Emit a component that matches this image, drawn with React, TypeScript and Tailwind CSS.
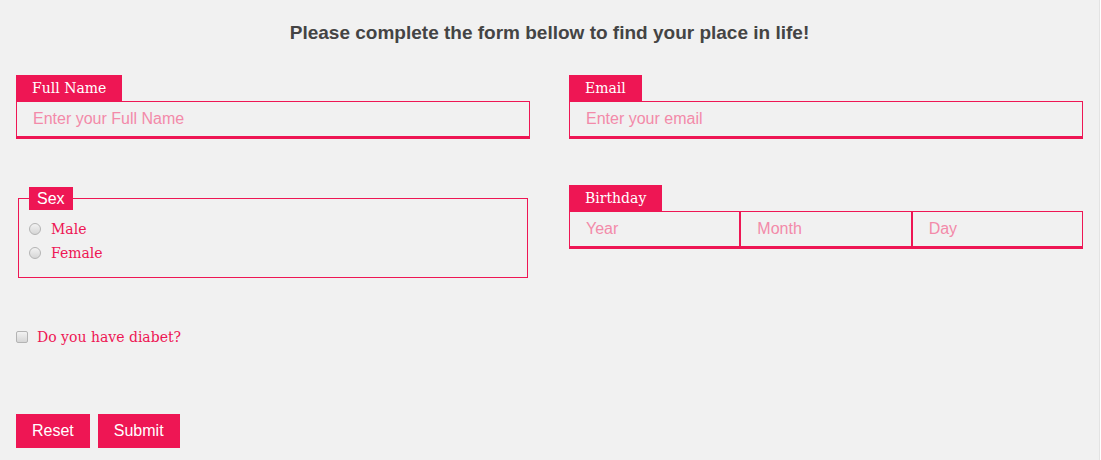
import { useState } from 'react';

const serif = 'font-["DejaVu_Serif",serif]';
const sans = 'font-["Liberation_Sans",Arial,sans-serif]';

function FieldLabel({ children }: { children: React.ReactNode }) {
  return (
    <div className={`${serif} inline-block h-[26px] bg-[#ee1654] px-4 text-[14px] leading-[26px] text-white`}>
      {children}
    </div>
  );
}

function TextBox({ placeholder, className = '' }: { placeholder: string; className?: string }) {
  return (
    <input
      type="text"
      placeholder={placeholder}
      className={`${sans} block h-[38px] w-full min-w-0 border border-b-[3px] border-[#ee1654] bg-transparent px-4 text-[16px] text-[#ee1654] outline-none placeholder:text-[#f38aa9] ${className}`}
    />
  );
}

function Radio({ name, label }: { name: string; label: string }) {
  return (
    <label className="flex h-6 items-center gap-[10px]">
      <input
        type="radio"
        name={name}
        className="h-3 w-3 appearance-none rounded-full border border-[#b4b4b4] bg-linear-to-b from-[#f2f2f2] to-[#d6d6d6] checked:bg-[#ee1654]"
      />
      <span className={`${serif} text-[14px] text-[#ee1654]`}>{label}</span>
    </label>
  );
}

export default function App() {
  const [diabet, setDiabet] = useState(false);

  return (
    <div className="min-h-screen w-[1100px] border-r border-[#e3e3e3] bg-[#f1f1f1]">
      <h1 className={`${sans} pt-[22px] text-center text-[19px] font-bold leading-[22px] text-[#444]`}>
        Please complete the form bellow to find your place in life!
      </h1>

      <form className="px-4 pt-[31px]" onSubmit={(e) => e.preventDefault()}>
        <div className="grid grid-cols-2 gap-x-[39px]">
          <div>
            <FieldLabel>Full Name</FieldLabel>
            <TextBox placeholder="Enter your Full Name" />
          </div>
          <div>
            <FieldLabel>Email</FieldLabel>
            <TextBox placeholder="Enter your email" />
          </div>
        </div>

        <div className="mt-[46px] grid grid-cols-2 items-start gap-x-[39px]">
          <fieldset className="mx-[2px] mt-[2px] border border-[#ee1654] pb-3 pl-[10px] pr-[10px] pt-[7px]">
            <legend className={`${sans} h-[23px] bg-[#ee1654] px-2 text-[16px] leading-[23px] text-white`}>Sex</legend>
            <Radio name="sex" label="Male" />
            <Radio name="sex" label="Female" />
          </fieldset>
          <div>
            <FieldLabel>Birthday</FieldLabel>
            <div className="flex">
              <TextBox placeholder="Year" className="flex-1" />
              <TextBox placeholder="Month" className="flex-1" />
              <TextBox placeholder="Day" className="flex-1" />
            </div>
          </div>
        </div>

        <label className="mt-[47px] flex h-6 items-center gap-[9px]">
          <input
            type="checkbox"
            checked={diabet}
            onChange={(e) => setDiabet(e.target.checked)}
            className="h-3 w-3 appearance-none rounded-[2px] border border-[#b4b4b4] bg-linear-to-b from-[#f2f2f2] to-[#d6d6d6] checked:bg-[#ee1654]"
          />
          <span className={`${serif} text-[14px] text-[#ee1654]`}>Do you have diabet?</span>
        </label>

        <div className="mt-[65px] flex gap-2">
          <button type="reset" className={`${sans} h-[34px] bg-[#ee1654] px-4 text-[16px] text-white`}>
            Reset
          </button>
          <button type="submit" className={`${sans} h-[34px] bg-[#ee1654] px-4 text-[16px] text-white`}>
            Submit
          </button>
        </div>
      </form>
    </div>
  );
}
